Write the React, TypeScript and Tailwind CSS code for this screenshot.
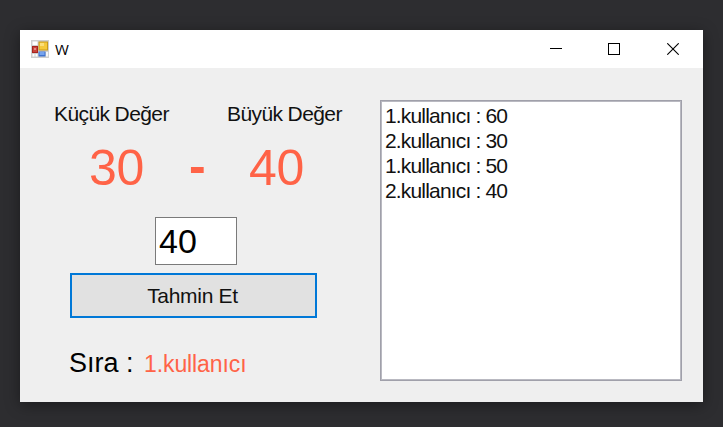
const guesses = [
  { user: '1.kullanıcı', value: 60 },
  { user: '2.kullanıcı', value: 30 },
  { user: '1.kullanıcı', value: 50 },
  { user: '2.kullanıcı', value: 40 },
];

function AppIcon() {
  return (
    <svg className="block h-[18px] w-[18px]" viewBox="0 0 18 18">
      <rect width="18" height="18" fill="#cfcfcf" />
      <rect x="1.5" y="1.5" width="5" height="3.5" fill="#fff" />
      <rect x="7.5" y="1.5" width="9.5" height="9" fill="#c99a1a" />
      <rect x="8.5" y="2.5" width="7.5" height="7" fill="#f5c93c" />
      <rect x="9" y="3" width="4" height="3" fill="#fbdf7c" />
      <rect x="1" y="6" width="6" height="7" fill="#a8231e" />
      <rect x="2" y="7" width="4" height="5" fill="#c9453c" />
      <rect x="3" y="8" width="2" height="2" fill="#e58a80" />
      <rect x="7.5" y="11.5" width="7" height="5" fill="#3f73cf" />
      <rect x="8.5" y="12" width="5" height="3" fill="#76a3ee" />
      <rect x="1.5" y="14" width="2" height="2.5" fill="#fff" />
      <rect x="4.5" y="14" width="2" height="2.5" fill="#fff" />
      <rect x="15.2" y="12" width="1.6" height="4.5" fill="#fff" />
    </svg>
  );
}

function TitleBar() {
  return (
    <header className="flex h-[38px] items-center bg-white pl-[11px] pr-[24px]">
      <AppIcon />
      <span className="ml-[6px] font-['Open_Sans','Noto_Sans',sans-serif] text-[15px] leading-[18px]">W</span>
      <div className="ml-auto flex h-[12px] items-center">
        <svg className="mr-[46px] h-[12px] w-[12px]" viewBox="0 0 12 12" shapeRendering="crispEdges">
          <rect y="5" width="12" height="1" />
        </svg>
        <svg className="mr-[47px] h-[12px] w-[12px]" viewBox="0 0 12 12" fill="none" stroke="#000" shapeRendering="crispEdges">
          <rect x="0.5" y="0.5" width="11" height="11" />
        </svg>
        <svg className="h-[12px] w-[12px]" viewBox="0 0 12 12" stroke="#000" strokeWidth="1.1">
          <path d="M0.3 0.3L11.7 11.7M11.7 0.3L0.3 11.7" />
        </svg>
      </div>
    </header>
  );
}

function GuessForm() {
  return (
    <section className="flex w-[360px] flex-col">
      <div className="mt-[33px] flex h-[24px] pl-[34px] text-[21px] leading-[25px] tracking-[-0.6px] text-[#111]">
        <span className="w-[173px]">Küçük Değer</span>
        <span>Büyük Değer</span>
      </div>
      <div className="mt-[15px] flex h-[56px] pl-[69px] text-[50px] leading-[56px] tracking-[-0.3px] text-[#ff6347]">
        <span className="w-[100px]">30</span>
        <span className="w-[60px] font-bold leading-[53px]">-</span>
        <span>40</span>
      </div>
      <div className="ml-[135px] mt-[21px] h-[48px] w-[82px] border border-[#7a7a7a] bg-white pl-[3px] text-[34px] leading-[47px]">
        40
      </div>
      <button className="ml-[50px] mt-[8px] h-[45px] w-[247px] border-2 border-[#0078d7] bg-[#e1e1e1] pr-[2px] text-[21px] leading-[40px] tracking-[-0.3px] text-[#111]">
        Tahmin Et
      </button>
      <div className="mt-[29px] flex h-[32px] items-baseline pl-[49px] text-[27px] leading-[32px]">
        <span className="w-[75px]">Sıra :</span>
        <span className="text-[23px] tracking-[-0.1px] text-[#ff6347]">1.kullanıcı</span>
      </div>
    </section>
  );
}

export default function App() {
  return (
    <main className="h-[427px] w-[723px] overflow-hidden bg-[#2d2d30] px-[20px] pt-[30px] font-['Liberation_Sans',Arial,sans-serif] text-black">
      <div className="h-[372px] w-[683px] bg-[#efefef] shadow-[0_3px_14px_rgba(0,0,0,0.4)]">
        <TitleBar />
        <div className="flex">
          <GuessForm />
          <ul className="mt-[32px] h-[281px] w-[302px] border border-[#a0a0aa] bg-white pl-[4px] pt-[2px] text-[21px] leading-[25px] tracking-[-0.83px] text-[#111] shadow-[inset_0_0_0_1px_#b9b9c1]">
            {guesses.map((g, i) => (
              <li key={i} className="h-[25px]">
                {g.user} : {g.value}
              </li>
            ))}
          </ul>
        </div>
      </div>
    </main>
  );
}
